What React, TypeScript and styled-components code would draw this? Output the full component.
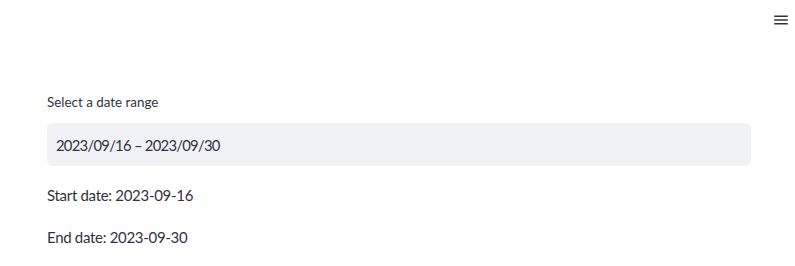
import React from "react";
import styled, { createGlobalStyle } from "styled-components";

const Global = createGlobalStyle`
  html, body { margin: 0; padding: 0; background: #ffffff; }
  body { font-family: "Lato", "Open Sans", sans-serif; color: rgb(49, 51, 63); }
`;

const Page = styled.div`
  width: 795px;
  height: 266px;
  overflow: hidden;
`;

const Header = styled.header`
  height: 30px;
  display: flex;
  justify-content: flex-end;
  align-items: flex-start;
  padding: 11px 5px 0 0;
  box-sizing: border-box;
`;

const MenuButton = styled.button`
  border: none;
  background: transparent;
  padding: 0;
  width: 18px;
  height: 18px;
  display: flex;
  color: rgb(49, 51, 63);
`;

const Main = styled.main`
  padding: 62px 44px 0 47px;
  display: flex;
  flex-direction: column;
`;

const Label = styled.label`
  font-size: 13.4px;
  line-height: 21px;
  height: 21px;
  margin-bottom: 10px;
  display: block;
`;

const DateBox = styled.div`
  height: 43px;
  background: #f0f2f6;
  border-radius: 6px;
  display: flex;
  align-items: center;
  padding-left: 9px;
  font-size: 14.8px;
  letter-spacing: -0.72px;
  margin-bottom: 16px;
`;

const Para = styled.p`
  margin: 0 0 16px 0;
  font-size: 15px;
  letter-spacing: -0.3px;
  line-height: 26px;
`;

export default function App() {
  return (
    <Page>
      <Global />
      <Header>
        <MenuButton aria-label="menu">
          <svg width="18" height="18" viewBox="0 0 24 24" fill="currentColor">
            <path d="M3 18h18v-2H3v2zm0-5h18v-2H3v2zm0-7v2h18V6H3z" />
          </svg>
        </MenuButton>
      </Header>
      <Main>
        <Label>Select a date range</Label>
        <DateBox>2023/09/16 – 2023/09/30</DateBox>
        <Para>Start date: 2023-09-16</Para>
        <Para>End date: 2023-09-30</Para>
      </Main>
    </Page>
  );
}
